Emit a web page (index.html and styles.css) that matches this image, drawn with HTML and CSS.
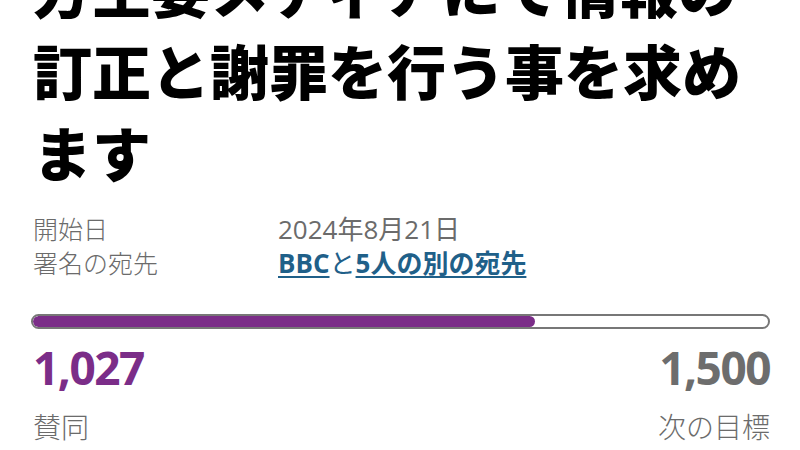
FILE: index.html
```html
<!DOCTYPE html>
<html lang="ja">
<head>
<meta charset="utf-8">
<link rel="stylesheet" href="styles.css">
</head>
<body>
<main class="page">
  <h1 class="title">方主要メディアにて情報の訂正と謝罪を行う事を求めます</h1>
  <dl class="meta">
    <div class="meta-row">
      <dt class="meta-label">開始日</dt>
      <dd class="meta-value">2024年8月21日</dd>
    </div>
    <div class="meta-row">
      <dt class="meta-label">署名の宛先</dt>
      <dd class="meta-value"><a class="link" href="#">BBC</a><span class="link-sep">と</span><a class="link" href="#">5人の別の宛先</a></dd>
    </div>
  </dl>
  <div class="progress"><div class="progress-fill" style="width:68.3%"></div></div>
  <div class="stats">
    <div class="stat">
      <div class="stat-num stat-num--current">1,027</div>
      <div class="stat-label">賛同</div>
    </div>
    <div class="stat stat--right">
      <div class="stat-num stat-num--goal">1,500</div>
      <div class="stat-label">次の目標</div>
    </div>
  </div>
</main>
</body>
</html>
```
FILE: styles.css
```css
html, body {
  margin: 0;
  padding: 0;
  background: #ffffff;
  overflow: hidden;
}
body {
  width: 800px;
  height: 450px;
  font-family: "Open Sans", "Noto Sans CJK JP", sans-serif;
}
.page {
  padding: 0 30px 0 33px;
}
.title {
  margin: -53px 0 0 0;
  font-family: "Noto Sans CJK JP", sans-serif;
  font-weight: 900;
  font-size: 59px;
  line-height: 82px;
  color: #000;
  letter-spacing: 0;
}
.meta {
  margin: 19px 0 0 0;
}
.meta-row {
  display: flex;
  align-items: baseline;
  line-height: 33px;
  color: #6b6b6b;
}
.meta-label {
  width: 245px;
  font-family: "Noto Sans CJK JP", sans-serif;
  font-weight: 300;
  font-size: 25px;
}
.meta-value {
  margin: 0;
  font-size: 26px;
  font-family: "Open Sans", "Noto Sans CJK JP", sans-serif;
}
.link {
  color: #1f6089;
  font-weight: 700;
  text-decoration: underline;
  text-decoration-thickness: 2px;
  text-underline-offset: 3px;
}
.link-sep {
  color: #1f6089;
}
.progress {
  margin: 34px 0 0 -2px;
  height: 11px;
  border: 2px solid #777;
  border-radius: 8px;
  overflow: hidden;
  width: 735px;
}
.progress-fill {
  height: 100%;
  background: #7b2d88;
  border-radius: 8px;
}
.stats {
  display: flex;
  justify-content: space-between;
  margin-top: 11px;
}
.stat--right {
  text-align: right;
}
.stat-num {
  font-family: "Open Sans", sans-serif;
  font-weight: 700;
  font-size: 46px;
  line-height: 54px;
  letter-spacing: -1.5px;
}
.stat-num--current { color: #7b2d88; }
.stat-num--goal { color: #6d6d6d; }
.stat-label {
  margin-top: 12px;
  font-family: "Noto Sans CJK JP", sans-serif;
  font-weight: 300;
  font-size: 28px;
  line-height: 40px;
  color: #6b6b6b;
}
```
